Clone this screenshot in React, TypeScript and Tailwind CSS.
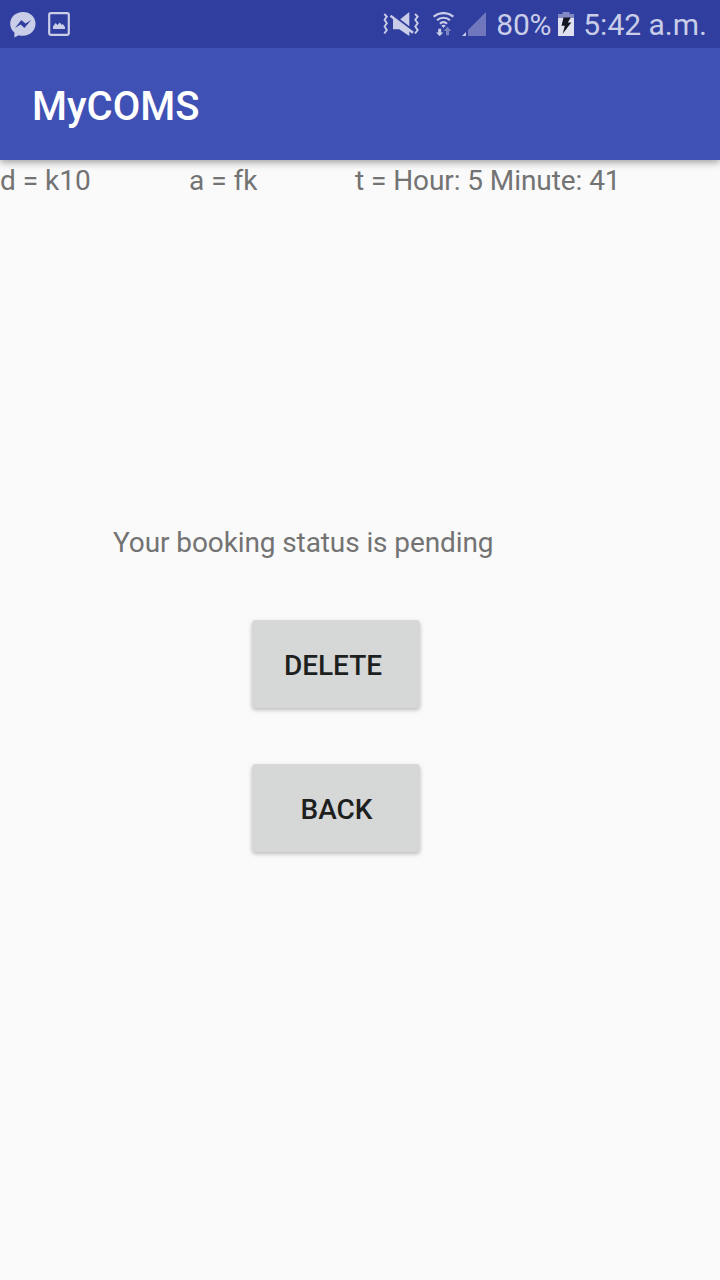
function Messenger() {
  return (
    <svg className="ml-[10px] mt-[3px] h-7 w-[26px]" viewBox="0 0 26 28">
      <path fillRule="evenodd" fill="#c9cde8" d="M13 0C5.800 0 .2 5 .2 11.700c0 3.600 1.600 6.600 4.200 8.900v5l4.400-2.400c1.300.4 2.700.5 4.200.5 7.100 0 12.500-5.200 12.500-12S20.100 0 13 0ZM5 16l6.300-8 4.200 3.500 5.700-3.500-6.800 8-3.800-3.600-5.600 3.600Z" />
    </svg>
  )
}

function Picture() {
  return (
    <svg className="ml-3 h-6 w-[22px]" viewBox="0 0 22 24">
      <rect x="1.200" y="1.200" width="19.600" height="21.600" rx="1.700" fill="none" stroke="#c9cde8" strokeWidth="2.200" />
      <path fill="#c9cde8" d="M5 17v-2.500l2.500-3.500 2 2 2.300-2.500 2 2.500 1-1 2.200 3V17Z" />
    </svg>
  )
}

function MutedVibrate() {
  return (
    <svg className="h-6 w-9" viewBox="0 0 36 24">
      <path fill="none" stroke="#c9cde8" strokeWidth="1.900" d="M1.300 2l2.500 2.500-2.200 3.300 2.200 3.400-2.200 3.400 2.200 3.400-2.500 3.500M32 2l2.700 2.500-2.400 3.300 2.400 3.400-2.400 3.400 2.400 3.400-2.700 3.500" />
      <path fill="#c9cde8" d="M26.300 0v14.200L17.200 7.200ZM10 6.500V17.200h6.300l10 6.800V18Z" />
      <path fill="none" stroke="#c9cde8" strokeWidth="2.400" d="M7.500 3.700l22.500 17" />
    </svg>
  )
}

function Wifi() {
  return (
    <svg className="ml-[14px] h-6 w-[21px]" viewBox="0 0 21 24">
      <g fill="none" stroke="#c9cde8" strokeWidth="2.200">
        <path d="M.7 4.700C6-.2 15-.2 20.300 4.700" />
        <path d="M4.100 8.300c3.300-3.400 9.500-3.400 12.800 0" />
        <path d="M7 11.700c1.900-2 5.100-2 7 0" />
      </g>
      <path fill="#c9cde8" d="M8.300 13.500q2.200-1.700 4.400 0l-2.200 2.500ZM5.200 16.800h3v3.700h2.200L6.700 24.200l-3.700-3.700h2.200Z" />
      <path fill="#7c83c2" d="M14.500 14.800l3.900 4.300h-2.400v4.200h-3v-4.200h-2.400Z" />
    </svg>
  )
}

function Signal() {
  return (
    <svg className="ml-[8px] h-6 w-6" viewBox="0 0 24 24">
      <path fill="#7077bc" d="M24 0v24H6V18Z" />
      <path fill="#c9cde8" d="M0 24l4-4v4Z" />
    </svg>
  )
}

function Battery() {
  return (
    <svg className="ml-[6px] h-6 w-4" viewBox="0 0 16 24">
      <path fill="#8389c4" d="M4.500 0h7v2H16v4H0V2h4.500Z" />
      <path fill="#dfe1f1" d="M0 6h16v18H0Z" />
      <path fill="#141722" d="M5.500 5.500h7.300L9.800 10.500h3.500L4.700 21.700 6.800 13.800H3.500Z" />
    </svg>
  )
}

function Action({ label, className }: { label: string; className: string }) {
  return (
    <button className="flex h-[88px] w-[168px] items-center justify-center rounded-[4px] bg-[#d6d7d7] pt-[3px] text-[28px] font-medium leading-8 text-[#1e1f1f] shadow-[0_2px_4px_rgba(0,0,0,0.26)]">
      <span className={className}>{label}</span>
    </button>
  )
}

export default function App() {
  return (
    <div className="flex h-[1280px] w-[720px] flex-col overflow-hidden bg-[#fafafa] font-['Roboto',sans-serif] text-[28px] leading-[38px] text-[#737373]">
      <div className="relative z-10 flex h-12 shrink-0 items-center bg-[#303f9f] text-[30px] leading-9 text-[#c9cde8]">
        <Messenger />
        <Picture />
        <div className="ml-auto flex items-center pr-[13px]">
          <MutedVibrate />
          <Wifi />
          <Signal />
          <span className="ml-[10px] w-[56px] whitespace-nowrap pt-px tracking-[-0.2px]">80%</span>
          <Battery />
          <span className="ml-[9px] whitespace-nowrap pt-px">5:42 a.m.</span>
        </div>
      </div>
      <header className="flex h-28 shrink-0 items-center bg-[#3f51b5] pl-8 pt-[6px] text-[40px] font-medium leading-[48px] text-white shadow-[0_2px_8px_rgba(0,0,0,0.4)]">
        <h1>MyCOMS</h1>
      </header>
      <main className="flex flex-col">
        <div className="flex whitespace-nowrap pt-[2px]">
          <span className="w-[189px]">d = k10</span>
          <span className="w-[166px]">a = fk</span>
          <span className="tracking-[-0.07px]">t = Hour: 5 Minute: 41</span>
        </div>
        <p className="ml-[113px] mt-[324px] tracking-[-0.1px]">Your booking status is pending</p>
        <div className="ml-[252px] mt-[58px] flex flex-col gap-14">
          <Action label="DELETE" className="pr-[6px]" />
          <Action label="BACK" className="pl-px" />
        </div>
      </main>
    </div>
  )
}
